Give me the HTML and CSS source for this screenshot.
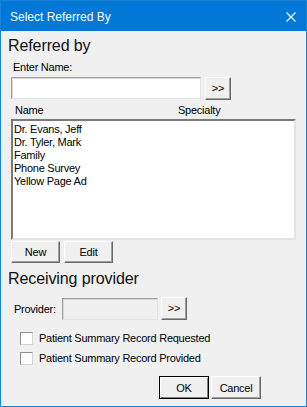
FILE: index.html
```html
<!DOCTYPE html>
<html lang="en">
<head>
  <meta charset="UTF-8" />
  <title>Select Referred By</title>
  <link rel="stylesheet" href="styles.css">
</head>
<body>

<div class="window">
  <div class="titlebar">
    <span class="title">Select Referred By</span>
    <svg class="close" width="10" height="10" viewBox="0 0 10 10">
      <path d="M0.5 0.5 L9.5 9.5 M9.5 0.5 L0.5 9.5" stroke="#fff" stroke-width="1.1" fill="none"/>
    </svg>
  </div>

  <div class="content">
    <!-- Referred by -->
    <h2 class="group-title">Referred by</h2>
    <div class="label-name">Enter Name:</div>
    <div class="name-row">
      <input class="field name-field" type="text" />
      <button class="btn btn-more">&gt;&gt;</button>
    </div>

    <div class="list-head">
      <span class="col-name">Name</span>
      <span class="col-spec">Specialty</span>
    </div>
    <ul class="list">
      <li>Dr. Evans, Jeff</li>
      <li>Dr. Tyler, Mark</li>
      <li>Family</li>
      <li>Phone Survey</li>
      <li>Yellow Page Ad</li>
    </ul>
    <div class="list-buttons">
      <button class="btn btn-small">New</button>
      <button class="btn btn-small">Edit</button>
    </div>

    <!-- Receiving provider -->
    <h2 class="group-title second">Receiving provider</h2>
    <div class="provider-row">
      <span class="provider-label">Provider:</span>
      <input class="field provider-field" type="text" disabled />
      <button class="btn btn-more">&gt;&gt;</button>
    </div>

    <label class="check"><span class="box"></span>Patient Summary Record Requested</label>
    <label class="check"><span class="box"></span>Patient Summary Record Provided</label>

    <div class="footer">
      <button class="btn btn-dialog default">OK</button>
      <button class="btn btn-dialog">Cancel</button>
    </div>
  </div>
</div>

</body>
</html>
```

FILE: styles.css
```css
body {
  margin: 0;
  font-family: 'Liberation Sans', Arial, sans-serif;
  font-size: 11px;
  letter-spacing: -0.25px;
  color: #000;
  background: #f0f0f0;
}

.window {
  width: 305px;
  height: 405px;
  border: 1px solid #1883d7;
  background: #f0f0f0;
  overflow: hidden;
}

.titlebar {
  height: 30px;
  background: #0078d7;
  color: white;
  display: flex;
  align-items: center;
  justify-content: space-between;
  padding: 0 10px 0 9px;
  letter-spacing: 0;
}

.title {
  font-size: 12px;
  padding-top: 1px;
}

.close {
  display: block;
  margin-top: 1px;
}

.content {
  padding: 0 12px 0 9px;
}

.group-title {
  font-size: 16px;
  font-weight: normal;
  letter-spacing: -0.1px;
  line-height: 19px;
  margin: 5px 0 0 -2px;
  color: #111;
}

.group-title.second {
  margin-top: 6px;
}

.label-name {
  line-height: 13px;
  margin: 6px 0 0 3px;
}

.name-row {
  display: flex;
  gap: 4px;
  margin-top: 3px;
}

.field {
  box-sizing: border-box;
  height: 22px;
  margin: 0;
  padding: 0 3px;
  background: #fff;
  border: 1px solid #adadad;
  border-color: #a0a0a0 #e3e3e3 #e3e3e3 #a0a0a0;
  box-shadow: inset 1px 1px 0 #d7d7d7;
  font: inherit;
}

.name-field {
  width: 190px;
  margin-left: 1px;
}

.btn {
  box-sizing: border-box;
  margin: 0;
  padding: 0;
  font: inherit;
  letter-spacing: inherit;
  color: #000;
  background: #f0f0f0;
  border: 1px solid;
  border-color: #fff #696969 #696969 #fff;
  box-shadow: inset -1px -1px 0 #a0a0a0;
}

.btn-more {
  width: 26px;
  height: 23px;
  padding-bottom: 1px;
}

.list-head {
  position: relative;
  height: 13px;
  line-height: 13px;
  margin-top: 4px;
}

.col-name {
  margin-left: 5px;
}

.col-spec {
  position: absolute;
  left: 168px;
}

.list {
  list-style: none;
  box-sizing: border-box;
  width: 285px;
  height: 121px;
  margin: 2px 0 0 1px;
  padding: 2px 1px;
  background: #fff;
  border: 2px solid;
  border-color: #7a7a7a #e3e3e3 #e3e3e3 #7a7a7a;
}

.list li {
  line-height: 13px;
}

.list-buttons {
  display: flex;
  gap: 4px;
  margin: 1px 0 0 1px;
}

.btn-small {
  width: 49px;
  height: 22px;
}

.provider-row {
  display: flex;
  align-items: center;
  margin-top: 9px;
}

.provider-label {
  width: 48px;
  margin-left: 4px;
}

.provider-field {
  width: 96px;
  background: #f0f0f0;
  margin-right: 3px;
}

.provider-row .btn-more {
  height: 23px;
}

.check {
  display: flex;
  align-items: center;
  height: 13px;
  margin: 12px 0 0 10px;
  line-height: 13px;
}

.check + .check {
  margin-top: 7px;
}

.box {
  box-sizing: border-box;
  width: 13px;
  height: 13px;
  margin-right: 6px;
  background: #fff;
  border: 1px solid;
  border-color: #8f8f8f #d4d4d4 #d4d4d4 #8f8f8f;
}

.footer {
  display: flex;
  justify-content: flex-end;
  gap: 2px;
  margin: 11px 33px 0 0;
}

.btn-dialog {
  width: 50px;
  height: 23px;
}

.btn.default {
  outline: 1px solid #000;
  outline-offset: -1px;
  border-color: #fff #404040 #404040 #fff;
  box-shadow: inset 1px 1px 0 #fff, inset -1px -1px 0 #808080;
}
```
